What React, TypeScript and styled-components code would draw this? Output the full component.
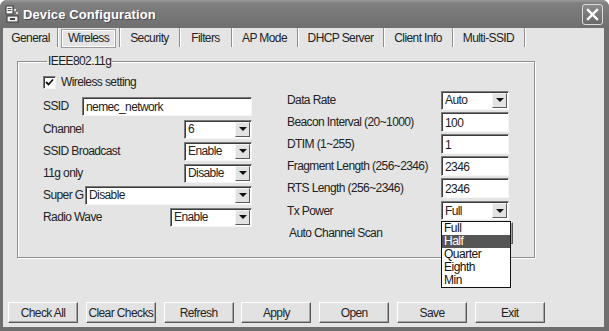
import React from 'react';
import styled, { createGlobalStyle } from 'styled-components';

const GlobalStyle = createGlobalStyle`
  html, body { margin: 0; padding: 0; background: #ffffff; }
  body { font-family: "Liberation Sans", Arial, sans-serif; }
  * { box-sizing: border-box; }
`;

const Window = styled.div`
  width: 609px;
  height: 331px;
  display: flex;
  flex-direction: column;
  background: #6e6e6e;
  border-radius: 7px 7px 0 0;
  overflow: hidden;
`;

const TitleBar = styled.div`
  height: 28px;
  flex: none;
  display: flex;
  align-items: center;
  padding: 0 6px 0 5px;
  background: linear-gradient(#9a9a9a 0%, #7f7f7f 12%, #767676 60%, #6f6f6f 100%);
`;

const TitleText = styled.div`
  margin-left: 4px;
  color: #ffffff;
  font-weight: bold;
  font-size: 13px;
  letter-spacing: 0.1px;
  text-shadow: 1px 1px 0 #4a4a4a;
  flex: 1;
`;

const CloseButton = styled.div`
  width: 21px;
  height: 21px;
  border: 1px solid #dcdcdc;
  border-radius: 3px;
  background: linear-gradient(#8a8a8a, #6a6a6a);
  display: flex;
  align-items: center;
  justify-content: center;
`;

const Body = styled.div`
  flex: 1;
  margin: 0 5px 4px 3px;
  background: #e4e4e4;
  display: flex;
  flex-direction: column;
  color: #222222;
  font-size: 12px;
  letter-spacing: -0.6px;
`;

const TabStrip = styled.div`
  height: 20px;
  display: flex;
  padding-left: 1px;
`;

const Tab = styled.div<{ $w: number }>`
  width: ${p => p.$w}px;
  height: 19px;
  display: flex;
  align-items: center;
  justify-content: center;
  border-right: 1px solid #8e8e8e;
  box-shadow: 1px 0 0 #ffffff;
`;

const TabLabel = styled.span<{ $active?: boolean }>`
  display: flex;
  align-items: center;
  height: 19px;
  padding: 0 6px;
  margin-top: 1px;
  ${p => p.$active && `
    border: 1px solid #9c9c9c;
    box-shadow: inset 1px 1px 0 #ffffff, inset -1px -1px 0 #ffffff;
  `}
`;

const Group = styled.fieldset`
  margin: 6px 0 0 14px;
  width: 518px;
  padding: 2px 0 0 25px;
  border: 1px solid #8e8e8e;
  box-shadow: 1px 1px 0 #ffffff, inset 1px 1px 0 #ffffff;
`;

const Legend = styled.legend`
  padding: 0 1px;
  margin-left: 4px;
  line-height: 14px;
`;

const Columns = styled.div`
  height: 187px;
  display: flex;
  gap: 35px;
`;

const Column = styled.div<{ $w: number; $top?: number }>`
  width: ${p => p.$w}px;
  margin-top: ${p => p.$top ?? 0}px;
  display: flex;
  flex-direction: column;
`;

const Row = styled.div<{ $h?: number }>`
  height: ${p => p.$h ?? 22}px;
  display: flex;
  align-items: center;
  justify-content: space-between;
  position: relative;
`;

const CheckRow = styled.label`
  height: 24px;
  display: flex;
  align-items: center;
  gap: 5px;
`;

const CheckBox = styled.span`
  width: 13px;
  height: 13px;
  background: #ffffff;
  border: 1px solid;
  border-color: #7a7a7a #f4f4f4 #f4f4f4 #7a7a7a;
  box-shadow: inset 1px 1px 0 #3c3c3c;
  display: flex;
  align-items: center;
  justify-content: center;
`;

const TextBox = styled.input<{ $w: number; $h?: number }>`
  width: ${p => p.$w}px;
  height: ${p => p.$h ?? 20}px;
  margin: 0;
  padding: 1px 0 0 3px;
  background: #ffffff;
  border: 1px solid;
  border-color: #7a7a7a #f6f6f6 #f6f6f6 #7a7a7a;
  box-shadow: inset 1px 1px 0 #3c3c3c;
  font-family: "Liberation Sans", Arial, sans-serif;
  font-size: 12px;
  letter-spacing: -0.6px;
  color: #1a1a1a;
  outline: none;
`;

const Combo = styled.div<{ $w: number }>`
  width: ${p => p.$w}px;
  height: 19px;
  background: #ffffff;
  border: 1px solid;
  border-color: #7a7a7a #f6f6f6 #f6f6f6 #7a7a7a;
  box-shadow: inset 1px 1px 0 #3c3c3c;
  display: flex;
  align-items: center;
  padding: 1px 1px 1px 3px;
  position: relative;
`;

const ComboValue = styled.span`
  flex: 1;
`;

const ArrowButton = styled.span`
  width: 15px;
  height: 15px;
  background: #e2e2e2;
  border: 1px solid;
  border-color: #f4f4f4 #5a5a5a #5a5a5a #f4f4f4;
  display: flex;
  align-items: center;
  justify-content: center;
  &::after {
    content: '';
    border-left: 4px solid transparent;
    border-right: 4px solid transparent;
    border-top: 4px solid #111111;
  }
`;

const DropList = styled.ul`
  position: absolute;
  top: 19px;
  left: -1px;
  width: 70px;
  margin: 0;
  padding: 0;
  list-style: none;
  background: #ffffff;
  border: 1px solid #111111;
  z-index: 2;
`;

const DropItem = styled.li<{ $selected?: boolean }>`
  height: 13px;
  line-height: 13px;
  padding-left: 2px;
  font-size: 12px;
  letter-spacing: -0.5px;
  background: ${p => (p.$selected ? '#555555' : 'transparent')};
  color: ${p => (p.$selected ? '#ffffff' : '#111111')};
`;

const Button = styled.button<{ $w?: number; $h?: number }>`
  width: ${p => p.$w ?? 70}px;
  height: ${p => p.$h ?? 21}px;
  margin: 0;
  padding: 0;
  background: #e2e2e2;
  border: 1px solid;
  border-color: #ffffff #585858 #585858 #ffffff;
  box-shadow: inset -1px -1px 0 #a4a4a4;
  font-family: "Liberation Sans", Arial, sans-serif;
  font-size: 12px;
  letter-spacing: -0.6px;
  color: #222222;
`;

const ButtonBar = styled.div`
  margin-top: auto;
  display: flex;
  gap: 7.8px;
  padding: 0 0 4px 5px;
`;

const tabs = [
  { name: 'General', w: 54 },
  { name: 'Wireless', w: 62, active: true },
  { name: 'Security', w: 60 },
  { name: 'Filters', w: 52 },
  { name: 'AP Mode', w: 66 },
  { name: 'DHCP Server', w: 86 },
  { name: 'Client Info', w: 69 },
  { name: 'Multi-SSID', w: 72 },
];

const leftSelects = [
  { label: 'Channel', value: '6', w: 68 },
  { label: 'SSID Broadcast', value: 'Enable', w: 68 },
  { label: '11g only', value: 'Disable', w: 68 },
  { label: 'Super G', value: 'Disable', w: 167 },
  { label: 'Radio Wave', value: 'Enable', w: 82 },
];

const rightInputs = [
  { label: 'Beacon Interval (20~1000)', value: '100' },
  { label: 'DTIM (1~255)', value: '1' },
  { label: 'Fragment Length (256~2346)', value: '2346' },
  { label: 'RTS Length (256~2346)', value: '2346' },
];

const powers = ['Full', 'Half', 'Quarter', 'Eighth', 'Min'];
const buttons = ['Check All', 'Clear Checks', 'Refresh', 'Apply', 'Open', 'Save', 'Exit'];

function Select({ value, w, children }: { value: string; w: number; children?: React.ReactNode }) {
  return (
    <Combo $w={w}>
      <ComboValue>{value}</ComboValue>
      <ArrowButton />
      {children}
    </Combo>
  );
}

function AppIcon() {
  return (
    <svg width="14" height="18" viewBox="0 0 14 18">
      <rect x="1" y="1" width="7" height="8" fill="#f4f4f4" stroke="#3a3a3a" strokeWidth="1" />
      <rect x="2.5" y="3" width="4" height="1" fill="#555" />
      <rect x="2.5" y="5" width="4" height="1" fill="#555" />
      <rect x="9" y="4" width="2" height="2" fill="#dcdcdc" />
      <rect x="11" y="7" width="2" height="2" fill="#dcdcdc" />
      <rect x="2" y="11" width="11" height="6" fill="#f0f0f0" stroke="#3a3a3a" strokeWidth="1" />
      <rect x="5" y="13" width="5" height="2" fill="#444" />
    </svg>
  );
}

export default function App() {
  return (
    <>
      <GlobalStyle />
      <Window>
        <TitleBar>
          <AppIcon />
          <TitleText>Device Configuration</TitleText>
          <CloseButton>
            <svg width="13" height="13" viewBox="0 0 13 13">
              <path d="M2 2 L11 11 M11 2 L2 11" stroke="#ffffff" strokeWidth="2.4" strokeLinecap="square" />
            </svg>
          </CloseButton>
        </TitleBar>
        <Body>
          <TabStrip>
            {tabs.map(t => (
              <Tab key={t.name} $w={t.w}>
                <TabLabel $active={t.active}>{t.name}</TabLabel>
              </Tab>
            ))}
          </TabStrip>

          <Group>
            <Legend>IEEE802.11g</Legend>
            <Columns>
              <Column $w={209}>
                <CheckRow>
                  <CheckBox>
                    <svg width="9" height="9" viewBox="0 0 9 9">
                      <path d="M1 4 L3.5 6.5 L8 1.5" stroke="#111" strokeWidth="1.8" fill="none" />
                    </svg>
                  </CheckBox>
                  Wireless setting
                </CheckRow>
                <Row $h={24}>
                  <span>SSID</span>
                  <TextBox $w={170} $h={19} readOnly value="nemec_network" />
                </Row>
                {leftSelects.map(s => (
                  <Row key={s.label}>
                    <span>{s.label}</span>
                    <Select value={s.value} w={s.w} />
                  </Row>
                ))}
              </Column>

              <Column $w={222} $top={19}>
                <Row>
                  <span>Data Rate</span>
                  <Select value="Auto" w={68} />
                </Row>
                {rightInputs.map(r => (
                  <Row key={r.label}>
                    <span>{r.label}</span>
                    <TextBox $w={68} readOnly value={r.value} />
                  </Row>
                ))}
                <Row $h={23}>
                  <span>Tx Power</span>
                  <Select value="Full" w={68}>
                    <DropList>
                      {powers.map(p => (
                        <DropItem key={p} $selected={p === 'Half'}>{p}</DropItem>
                      ))}
                    </DropList>
                  </Select>
                </Row>
                <Row>
                  <span style={{ marginLeft: 2 }}>Auto Channel Scan</span>
                  <Button $w={72} $h={22} style={{ marginRight: -4 }}>Scan</Button>
                </Row>
              </Column>
            </Columns>
          </Group>

          <ButtonBar>
            {buttons.map(b => (
              <Button key={b}>{b}</Button>
            ))}
          </ButtonBar>
        </Body>
      </Window>
    </>
  );
}
